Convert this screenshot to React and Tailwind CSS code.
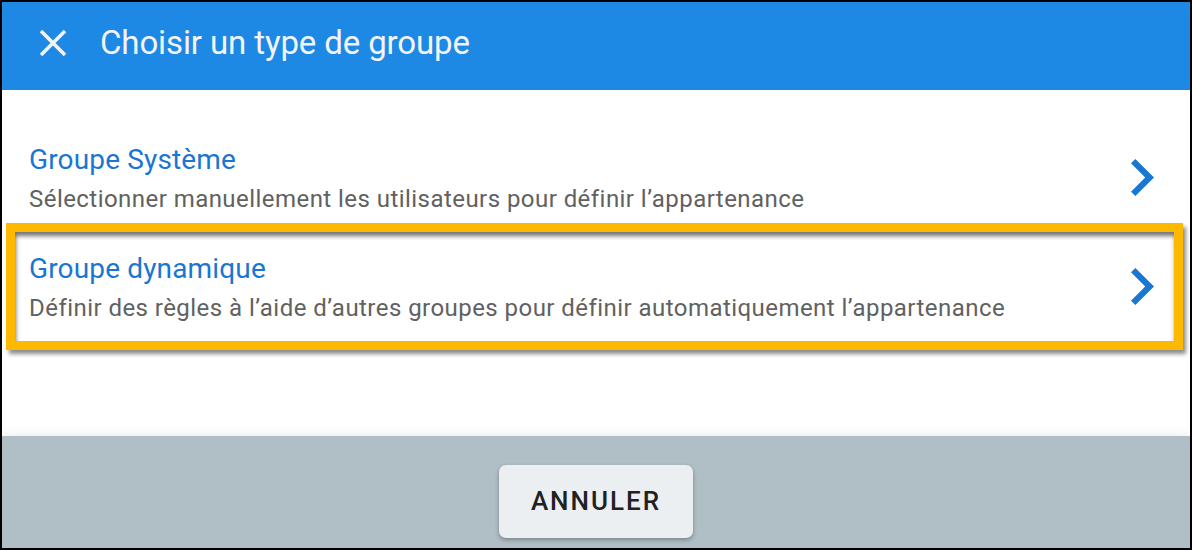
import React from "react";

const font = { fontFamily: "Roboto, 'Noto Sans', sans-serif" };

function Chevron() {
  return (
    <svg width="23" height="37" viewBox="8.59 6 7.41 12" preserveAspectRatio="none" className="shrink-0 self-center">
      <path d="M10 6L8.59 7.41 13.17 12l-4.58 4.59L10 18l6-6z" fill="#1976d2" />
    </svg>
  );
}

function Row({ title, desc, className }) {
  return (
    <div className={"flex h-[109px] items-start justify-between " + className}>
      <div className="flex flex-col pt-[21px]">
        <div className="text-[28px] leading-[32px] tracking-[0.15px] text-[#1976d2]">{title}</div>
        <div className="mt-[9px] text-[24px] leading-[28px] tracking-[0.45px] text-[#616161]">{desc}</div>
      </div>
      <Chevron />
    </div>
  );
}

export default function App() {
  return (
    <div style={font} className="flex h-[550px] w-[1192px] flex-col overflow-hidden border-2 border-black bg-white">
      <div className="flex h-[88px] shrink-0 items-start bg-[#1e88e5] pl-[37px] pt-[21px]">
        <svg width="28" height="28" viewBox="0 0 28 28" className="mt-[6px] shrink-0">
          <path d="M2 2L26 26M26 2L2 26" stroke="#f2f4f8" strokeWidth="3.6" />
        </svg>
        <div className="ml-[33px] text-[33px] leading-[40px] tracking-[-0.12px] text-[#f2f4f8]">Choisir un type de groupe</div>
      </div>
      <div className="flex-1 bg-white pt-[33px]">
        <Row
          className="pl-[27px] pr-[36px]"
          title="Groupe Système"
          desc="Sélectionner manuellement les utilisateurs pour définir l’appartenance"
        />
        <div className="mx-[4px] -mt-[9px] mr-[7px] border-[9px] border-[#fcb900] shadow-[3px_4px_4px_rgba(0,0,0,0.45)]">
          <div className="bg-white shadow-[inset_1px_4px_4px_rgba(0,0,0,0.55)]">
            <Row
              className="pl-[14px] pr-[20px]"
              title="Groupe dynamique"
              desc="Définir des règles à l’aide d’autres groupes pour définir automatiquement l’appartenance"
            />
          </div>
        </div>
      </div>
      <div className="flex h-[112px] shrink-0 justify-center bg-[#b0bec5] pt-[29px] shadow-[0_-3px_8px_rgba(0,0,0,0.06)]">
        <div className="flex h-[73px] w-[194px] items-center justify-center rounded-[7px] bg-[#eceff1] text-[26px] font-medium tracking-[2px] text-[#212121] shadow-[0_2px_4px_rgba(0,0,0,0.3)]">
          ANNULER
        </div>
      </div>
    </div>
  );
}
